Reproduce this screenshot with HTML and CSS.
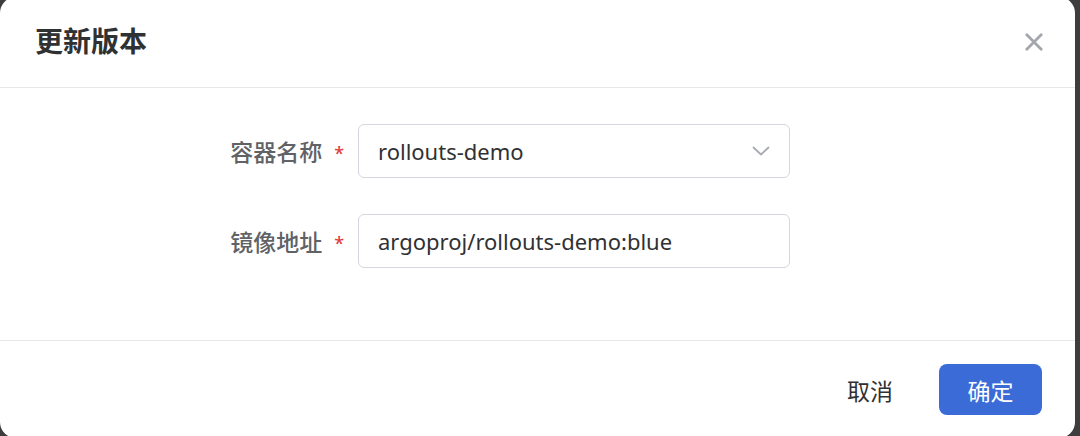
FILE: index.html
```html
<!DOCTYPE html>
<html lang="zh-CN">
<head>
<meta charset="utf-8">
<title>更新版本</title>
<link rel="stylesheet" href="styles.css">
</head>
<body>
<div class="dialog">
  <div class="dialog-header">
    <span class="dialog-title">更新版本</span>
    <button class="close-btn" aria-label="关闭">
      <svg width="18" height="18" viewBox="0 0 18 18"><path d="M1.8 1.8 L16.2 16.2 M16.2 1.8 L1.8 16.2" stroke="#a3a6ad" stroke-width="2.8" stroke-linecap="round" fill="none"/></svg>
    </button>
  </div>
  <div class="dialog-body">
    <div class="form-row">
      <label class="form-label">容器名称<span class="req">*</span></label>
      <div class="field select">
        <span class="field-text">rollouts-demo</span>
        <svg class="chevron" width="18" height="10" viewBox="0 0 18 10"><path d="M1.5 1.5 L9 8.5 L16.5 1.5" stroke="#a8abb2" stroke-width="1.8" fill="none" stroke-linecap="round" stroke-linejoin="round"/></svg>
      </div>
    </div>
    <div class="form-row">
      <label class="form-label">镜像地址<span class="req">*</span></label>
      <div class="field">
        <span class="field-text">argoproj/rollouts-demo:blue</span>
      </div>
    </div>
  </div>
  <div class="dialog-footer">
    <button class="btn btn-text">取消</button>
    <button class="btn btn-primary">确定</button>
  </div>
</div>
</body>
</html>
```

FILE: styles.css
```css
html, body {
  margin: 0;
  padding: 0;
}
body {
  background: #3d3d3d;
  width: 1080px;
  height: 436px;
  overflow: hidden;
  font-family: "Noto Sans", "Noto Sans CJK SC", sans-serif;
}
.dialog {
  width: 1075px;
  height: 441px;
  margin-top: -3px;
  background: #fff;
  border-radius: 16px;
  display: flex;
  flex-direction: column;
  box-sizing: border-box;
}
.dialog-header {
  box-sizing: border-box;
  height: 91px;
  flex: 0 0 91px;
  border-bottom: 1px solid #e6e7ea;
  display: flex;
  align-items: center;
  justify-content: space-between;
  padding: 0 32px 4px 35px;
}
.dialog-title {
  font-family: "Noto Sans CJK SC", sans-serif;
  font-size: 28px;
  font-weight: 600;
  color: #303133;
}
.close-btn {
  border: 0;
  background: none;
  padding: 0;
  margin-top: 4px;
  width: 18px;
  height: 18px;
  display: flex;
}
.dialog-body {
  padding: 36px 0 72px;
  display: flex;
  flex-direction: column;
  gap: 36px;
  flex: 0 0 auto;
}
.form-row {
  display: flex;
  align-items: center;
  padding-left: 196px;
}
.form-label {
  width: 162px;
  box-sizing: border-box;
  padding-right: 14px;
  text-align: right;
  font-family: "Noto Sans CJK SC", sans-serif;
  font-size: 23px;
  font-weight: 500;
  color: #606266;
  display: flex;
  justify-content: flex-end;
  align-items: center;
}
.req {
  color: #e0403f;
  font-family: "Noto Sans", sans-serif;
  font-size: 18px;
  margin-left: 12px;
  position: relative;
  top: 2px;
}
.field {
  box-sizing: border-box;
  width: 432px;
  height: 54px;
  border: 1px solid #d5d7de;
  border-radius: 6px;
  padding: 0 19px;
  display: flex;
  align-items: center;
  justify-content: space-between;
}
.field-text {
  font-family: "Noto Sans", sans-serif;
  font-size: 22px;
  color: #303133;
}
.dialog-footer {
  flex: 1 1 auto;
  border-top: 1px solid #e6e7ea;
  display: flex;
  align-items: center;
  justify-content: flex-end;
  padding-right: 33px;
  gap: 23px;
}
.btn {
  font-family: "Noto Sans CJK SC", sans-serif;
  font-size: 23px;
  border: 0;
  cursor: pointer;
}
.btn-text {
  background: none;
  color: #303133;
  padding: 0 23px;
  height: 51px;
}
.btn-primary {
  background: #3a6bd7;
  color: #fff;
  width: 103px;
  height: 51px;
  border-radius: 8px;
  padding: 0;
}
```
